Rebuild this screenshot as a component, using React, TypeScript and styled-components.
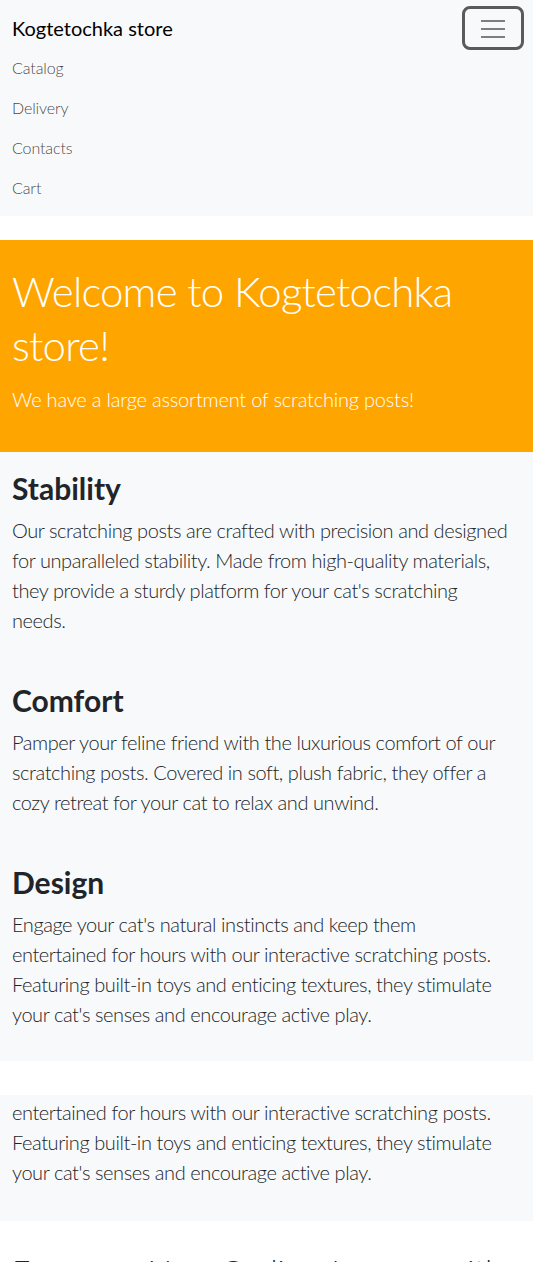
import React from "react";
import styled, { createGlobalStyle } from "styled-components";

const GlobalStyle = createGlobalStyle`
  * { box-sizing: border-box; }
  body {
    margin: 0;
    background: #fff;
    font-family: Lato, "Noto Sans", sans-serif;
    font-weight: 300;
    color: #212529;
    -webkit-font-smoothing: antialiased;
  }
`;

const Page = styled.div`
  display: flex;
  flex-direction: column;
  width: 533px;
  height: 1262px;
  overflow: hidden;
`;

const Navbar = styled.nav`
  background: #f8f9fa;
  padding: 8px 9px 8px 12px;
  display: flex;
  flex-direction: column;
`;

const NavTop = styled.div`
  height: 40px;
  display: flex;
  align-items: center;
  justify-content: space-between;
`;

const Brand = styled.a`
  font-size: 20px;
  font-weight: 400;
  color: #000;
  text-decoration: none;
`;

const Toggler = styled.button`
  width: 62px;
  height: 44px;
  border: 3px solid #5a5a5a;
  border-radius: 8px;
  background: transparent;
  display: flex;
  align-items: center;
  justify-content: center;
  padding: 0;
`;

const NavList = styled.ul`
  list-style: none;
  margin: 0;
  padding: 0;
  display: flex;
  flex-direction: column;
`;

const NavLink = styled.a`
  display: block;
  padding: 8px 0;
  font-size: 16px;
  line-height: 24px;
  color: rgba(0, 0, 0, 0.75);
  letter-spacing: -0.1px;
  text-decoration: none;
`;

const Hero = styled.header`
  margin-top: 24px;
  background: #ffa500;
  color: #fff;
  padding: 24px 12px 38px;
`;

const HeroTitle = styled.h1`
  margin: 0 0 12px;
  font-size: 42px;
  line-height: 54px;
  font-weight: 300;
  letter-spacing: -0.8px;
`;

const HeroLead = styled.p`
  margin: 0;
  font-size: 20px;
  line-height: 30px;
  font-weight: 300;
  letter-spacing: -0.2px;
`;

const Features = styled.section`
  background: #f8f9fa;
  padding: 18px 21px 32px 12px;
  display: flex;
  flex-direction: column;
  gap: 47px;
`;

const Feature = styled.article`
  display: flex;
  flex-direction: column;
  gap: 9px;
`;

const FeatureTitle = styled.h2`
  margin: 0;
  font-size: 30px;
  line-height: 36px;
  font-weight: 700;
  color: #212529;
`;

const FeatureText = styled.p`
  margin: 0;
  font-size: 20px;
  line-height: 30px;
  font-weight: 300;
  letter-spacing: -0.42px;
  color: #212529;
`;

const ClipPanel = styled.section`
  margin-top: 34px;
  height: 126px;
  flex-shrink: 0;
  background: #f8f9fa;
  overflow: hidden;
  display: flex;
  flex-direction: column;
  justify-content: flex-end;
  padding: 0 21px 34px 12px;
`;

const NextTitle = styled.h2`
  margin: 30px 0 0;
  padding: 0 12px;
  font-size: 32px;
  line-height: 40px;
  font-weight: 300;
  white-space: nowrap;
  color: #212529;
  flex-shrink: 0;
`;

const HamburgerIcon = () => (
  <svg width="26" height="20" viewBox="0 0 26 20" aria-hidden="true">
    <path d="M1 3h24M1 11h24M1 19h24" stroke="#555" strokeWidth="1.6" fill="none" />
  </svg>
);

const features = [
  {
    title: "Stability",
    text: "Our scratching posts are crafted with precision and designed for unparalleled stability. Made from high-quality materials, they provide a sturdy platform for your cat's scratching needs.",
  },
  {
    title: "Comfort",
    text: "Pamper your feline friend with the luxurious comfort of our scratching posts. Covered in soft, plush fabric, they offer a cozy retreat for your cat to relax and unwind.",
  },
  {
    title: "Design",
    text: "Engage your cat's natural instincts and keep them entertained for hours with our interactive scratching posts. Featuring built-in toys and enticing textures, they stimulate your cat's senses and encourage active play.",
  },
];

export default function App() {
  return (
    <Page>
      <GlobalStyle />
      <Navbar>
        <NavTop>
          <Brand href="#">Kogtetochka store</Brand>
          <Toggler aria-label="Toggle navigation">
            <HamburgerIcon />
          </Toggler>
        </NavTop>
        <NavList>
          {["Catalog", "Delivery", "Contacts", "Cart"].map((l) => (
            <li key={l}>
              <NavLink href="#">{l}</NavLink>
            </li>
          ))}
        </NavList>
      </Navbar>
      <Hero>
        <HeroTitle>Welcome to Kogtetochka store!</HeroTitle>
        <HeroLead>We have a large assortment of scratching posts!</HeroLead>
      </Hero>
      <Features>
        {features.map((f) => (
          <Feature key={f.title}>
            <FeatureTitle>{f.title}</FeatureTitle>
            <FeatureText>{f.text}</FeatureText>
          </Feature>
        ))}
      </Features>
      <ClipPanel>
        <FeatureText>{features[2].text}</FeatureText>
      </ClipPanel>
      <NextTitle>Empower Your Coding Journey with</NextTitle>
    </Page>
  );
}
